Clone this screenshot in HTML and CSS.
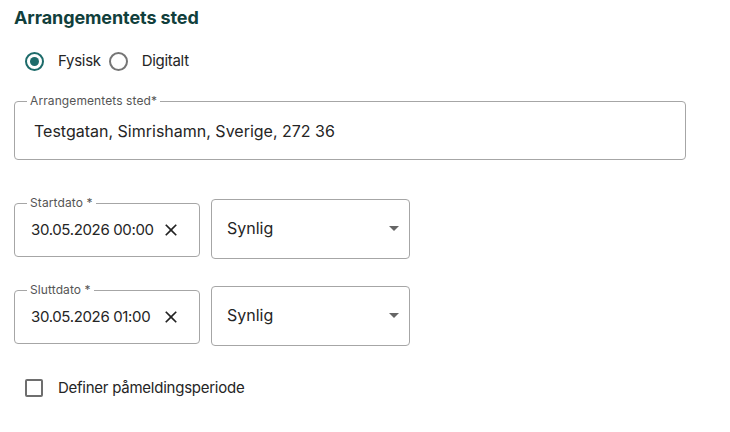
FILE: index.html
```html
<!DOCTYPE html>
<html lang="no">
<head>
<meta charset="utf-8">
<link rel="stylesheet" href="styles.css">
</head>
<body>
<main class="page">
  <h2 class="heading">Arrangementets sted</h2>
  <div class="radios">
    <label class="radio-opt"><span class="radio checked"><span class="dot"></span></span><span class="radio-label">Fysisk</span></label>
    <label class="radio-opt"><span class="radio"></span><span class="radio-label">Digitalt</span></label>
  </div>

  <fieldset class="field field-address">
    <legend class="legend">Arrangementets sted*</legend>
    <div class="field-value address-value">Testgatan, Simrishamn, Sverige, 272 36</div>
  </fieldset>

  <div class="date-row row-first">
    <fieldset class="field field-date">
      <legend class="legend">Startdato *</legend>
      <div class="field-value date-value">
        <span>30.05.2026 00:00</span>
        <svg class="clear" viewBox="0 0 24 24" width="20" height="20"><path d="M19 6.41 17.59 5 12 10.59 6.41 5 5 6.41 10.59 12 5 17.59 6.41 19 12 13.41 17.59 19 19 17.59 13.41 12z"/></svg>
      </div>
    </fieldset>
    <div class="select"><span>Synlig</span><span class="caret"></span></div>
  </div>

  <div class="date-row row-second">
    <fieldset class="field field-date">
      <legend class="legend">Sluttdato *</legend>
      <div class="field-value date-value">
        <span>30.05.2026 01:00</span>
        <svg class="clear" viewBox="0 0 24 24" width="20" height="20"><path d="M19 6.41 17.59 5 12 10.59 6.41 5 5 6.41 10.59 12 5 17.59 6.41 19 12 13.41 17.59 19 19 17.59 13.41 12z"/></svg>
      </div>
    </fieldset>
    <div class="select"><span>Synlig</span><span class="caret"></span></div>
  </div>

  <label class="check-row"><span class="checkbox"></span><span class="check-label">Definer påmeldingsperiode</span></label>
</main>
</body>
</html>
```

FILE: styles.css
```css
* { box-sizing: border-box; }
html, body { margin: 0; padding: 0; background: #ffffff; }
body {
  font-family: Inter, "Noto Sans", "Liberation Sans", sans-serif;
  color: #252525;
  width: 730px;
  height: 432px;
  overflow: hidden;
}
.page {
  display: flex;
  flex-direction: column;
  align-items: flex-start;
  padding: 0 0 0 14px;
}
.heading {
  margin: 7px 0 0 0;
  font-size: 18px;
  line-height: 22px;
  font-weight: 700;
  color: #113f3c;
  letter-spacing: -0.1px;
}
.radios {
  display: flex;
  align-items: center;
  margin-top: 22px;
  margin-left: 11px;
  height: 20px;
}
.radio-opt {
  display: flex;
  align-items: center;
}
.radio {
  width: 19px;
  height: 19px;
  border-radius: 50%;
  border: 2px solid #757575;
  display: flex;
  align-items: center;
  justify-content: center;
}
.radio.checked { border-color: #1d6b6a; }
.dot {
  width: 9px;
  height: 9px;
  border-radius: 50%;
  background: #1d6b6a;
}
.radio-label {
  font-size: 15px;
  line-height: 20px;
  margin-left: 14px;
  margin-right: 8px;
  letter-spacing: -0.3px;
}
.field {
  margin: 0;
  padding: 0;
  border: 1px solid #a6a6a6;
  border-radius: 4px;
  min-inline-size: 0;
}
.legend {
  font-size: 12px;
  line-height: 14px;
  color: #555555;
  padding: 0 3px;
  margin-left: 12px;
  letter-spacing: 0.1px;
}
.field-address {
  margin-top: 23px;
  width: 672px;
}
.address-value {
  font-size: 16px;
  line-height: 20px;
  padding: 13px 12px 18px 19px;
}
.date-row {
  display: flex;
  align-items: flex-start;
  gap: 12px;
}
.row-first { margin-top: 36px; }
.row-second { margin-top: 24px; }
.field-date { width: 186px; }
.date-value {
  display: flex;
  align-items: center;
  justify-content: space-between;
  font-size: 15px;
  line-height: 20px;
  letter-spacing: -0.35px;
  padding: 10px 18px 16px 16px;
}
.clear { fill: #222222; display: block; }
.select {
  margin-top: 3px;
  width: 199px;
  height: 60px;
  border: 1px solid #a6a6a6;
  border-radius: 4px;
  display: flex;
  align-items: center;
  justify-content: space-between;
  padding: 0 10px 2px 15px;
  font-size: 16px;
  line-height: 20px;
  margin-left: -1px;
}
.caret {
  width: 0;
  height: 0;
  border-left: 5px solid transparent;
  border-right: 5px solid transparent;
  border-top: 5px solid #666666;
}
.check-row {
  display: flex;
  align-items: center;
  margin-top: 32px;
  margin-left: 11px;
  height: 20px;
}
.checkbox {
  width: 18px;
  height: 18px;
  border: 2px solid #6e6e6e;
  border-radius: 2px;
}
.check-label {
  font-size: 15px;
  line-height: 20px;
  margin-left: 15px;
  letter-spacing: -0.25px;
}
```
